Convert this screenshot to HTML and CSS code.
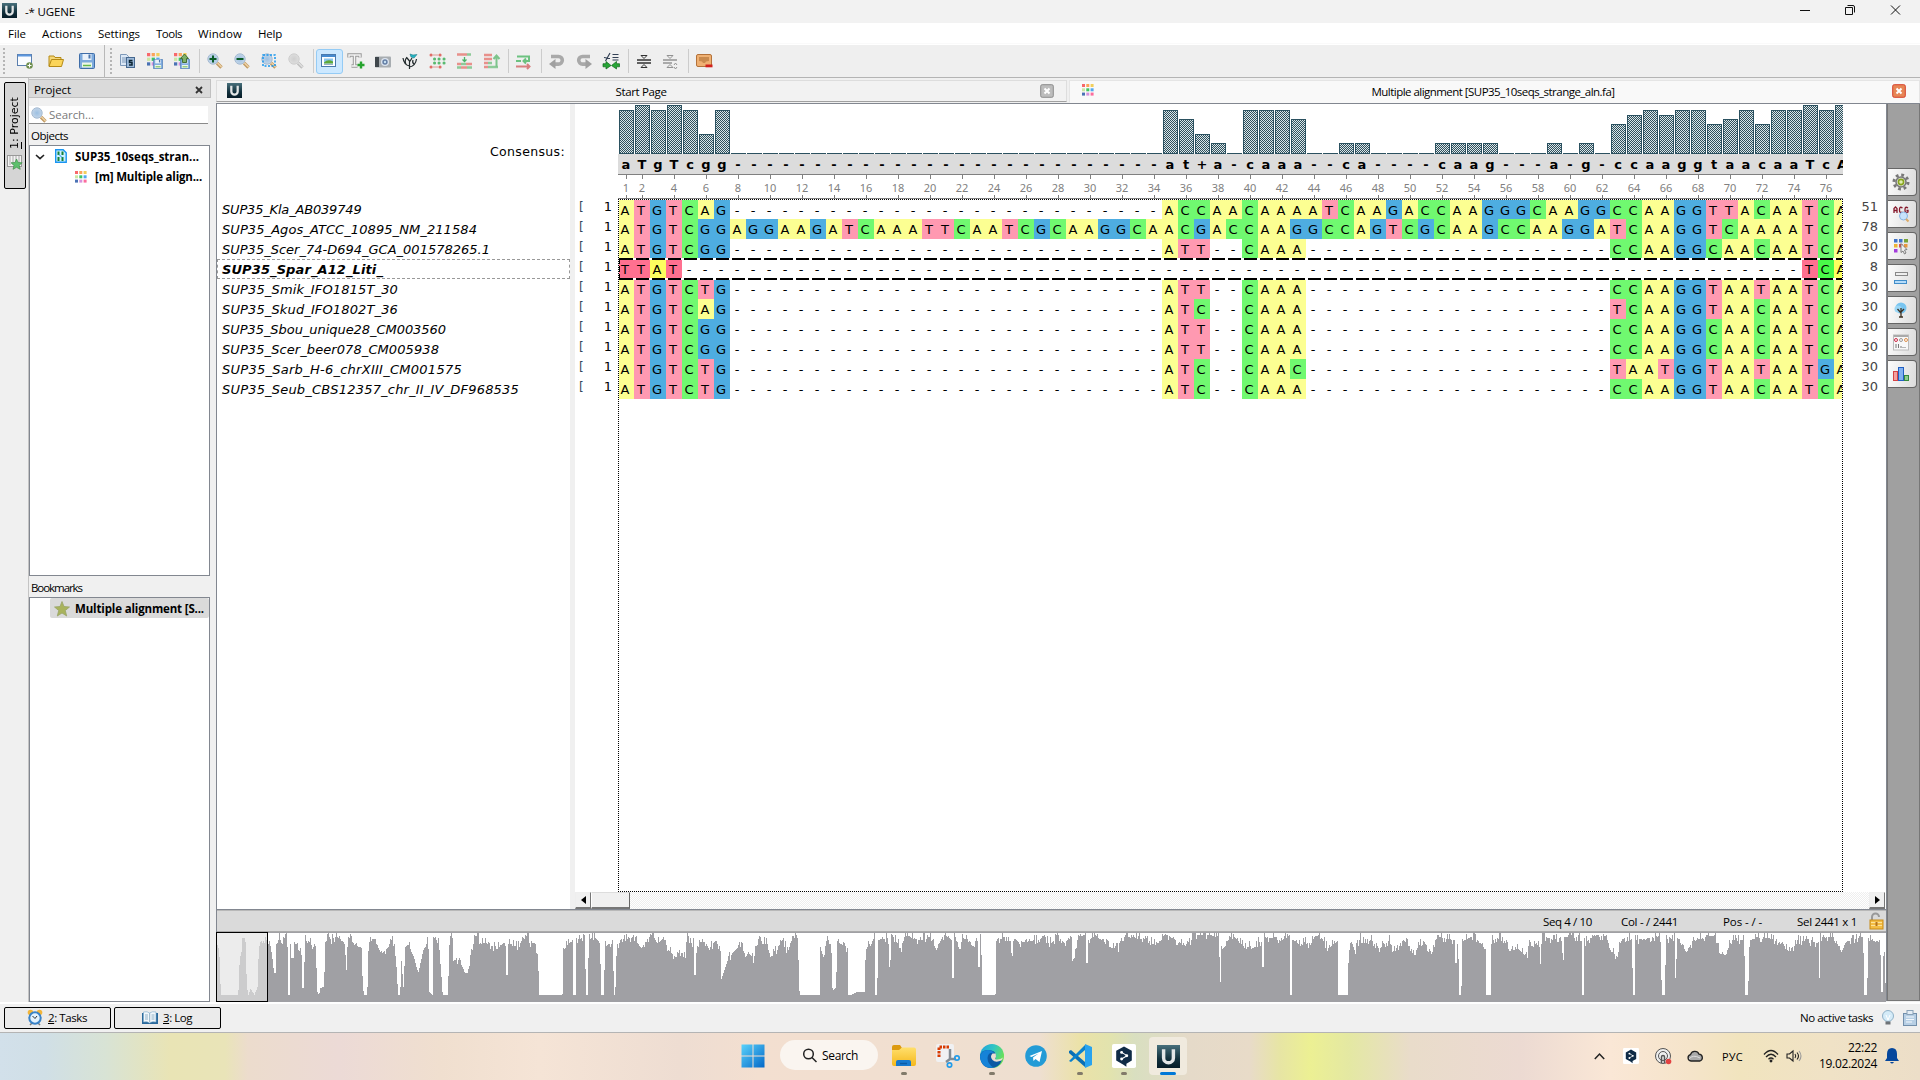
FILE: index.html
```html
<!DOCTYPE html>
<html lang="en">
<head>
<meta charset="utf-8">
<title>UGENE</title>
<link rel="stylesheet" href="styles.css">
</head>
<body>
<svg class="defs" aria-hidden="true">
  <defs>
    <linearGradient id="gTeal" x1="0" y1="0" x2="0" y2="1"><stop offset="0" stop-color="#48707c"/><stop offset=".6" stop-color="#12303c"/><stop offset="1" stop-color="#061c28"/></linearGradient>
    <linearGradient id="gWin" x1="0" y1="0" x2="1" y2="1"><stop offset="0" stop-color="#5ad2fb"/><stop offset="1" stop-color="#0468c8"/></linearGradient>
    <linearGradient id="gFold" x1="0" y1="0" x2="0" y2="1"><stop offset="0" stop-color="#ffdf6c"/><stop offset="1" stop-color="#f5b81d"/></linearGradient>
    <linearGradient id="gEdge" x1="0" y1="0" x2="1" y2=".4"><stop offset="0" stop-color="#1f9fe0"/><stop offset=".55" stop-color="#32c6c3"/><stop offset="1" stop-color="#67e05a"/></linearGradient>
    <radialGradient id="gLens"><stop offset="0" stop-color="#9cc0e2"/><stop offset="1" stop-color="#c3d5e8"/></radialGradient>
    <symbol id="logo" viewBox="0 0 16 16"><rect width="16" height="16" fill="url(#gTeal)"/><path d="M4.600 3v6a3.400 3.400 0 0 0 6.800 0V3" fill="none" stroke="#e3e6e7" stroke-width="2.400"/></symbol>
    <symbol id="lens" viewBox="0 0 16 16"><path d="M10 10l4.500 4.500" stroke="#c19a62" stroke-width="3.400"/><path d="M10.500 10l4 4" stroke="#efd4a8" stroke-width="1.400"/><circle cx="6" cy="6" r="5.200" fill="url(#gLens)" stroke="#a5bbd2"/></symbol>
    <symbol id="dots" viewBox="0 0 12 12"><path fill="#f8686b" d="M0 0h3v3H0z"/><path fill="#fba35a" d="M4.300 0h3v3h-3z"/><path fill="#f2cf5c" d="M8.600 0h3v3h-3z"/><path fill="#cbe7a4" d="M0 4.300h3v3H0z"/><path fill="#3fc663" d="M4.300 4.300h3v3h-3z"/><path fill="#51a8ef" d="M8.600 4.300h3v3h-3z"/><path fill="#4a72b4" d="M0 8.600h3v3H0z"/><path fill="#d592dd" d="M4.300 8.600h3v3h-3z"/><path fill="#fc6c9d" d="M8.600 8.600h3v3h-3z"/></symbol>
    <symbol id="floppy" viewBox="0 0 16 16"><rect x=".5" y=".5" width="15" height="15" rx="1" fill="#7daadd" stroke="#3f6da8"/><rect x="3.500" y="1" width="9" height="6" fill="#e9f1fa"/><path d="M9.500 1.500h2v4h-2z" fill="#4a76ae"/><rect x="3" y="9.500" width="10" height="5" fill="#eef7e8"/><path d="M4 12.500h8" stroke="#64b84b" stroke-width="1.500"/></symbol>
    <symbol id="uturn" viewBox="0 0 16 16"><path d="M2 3.500h7.500a3.800 3.800 0 0 1 0 7.600H5" fill="none" stroke="#a9a9a9" stroke-width="3.600"/><path d="M6.500 6v10L0 11z" fill="#a0a0a0"/></symbol>
    <symbol id="deepl" viewBox="0 0 20 20"><rect width="20" height="20" rx="1.500" fill="#fff"/><path d="M10 2l6.500 3.700v8L12 16.400V19l-2.800-2L3.500 13.700v-8z" fill="#0f2b46"/><path d="M8 7l4.500 2.700L8 12.500" fill="none" stroke="#fff" stroke-width=".9"/><circle cx="8" cy="7" r="1.200" fill="#fff"/><circle cx="12.300" cy="9.800" r="1.200" fill="#fff"/><circle cx="8" cy="12.500" r="1.200" fill="#fff"/></symbol>
  </defs>
</svg>

<header class="titlebar">
  <svg width="15" height="15"><use href="#logo"/></svg>
  <span data-w="50">-* UGENE</span>
  <svg class="wincontrols" width="110" height="23" fill="none" stroke="#111"><path d="M5 10.500h10"/><path d="M50.500 7.500h7v7h-7zM52.500 5.500h5.500q1.500 0 1.500 1.500v5.500"/><path d="M96 5.500l9 9m0-9l-9 9"/></svg>
</header>
<nav class="menubar">
  <span data-w="18">File</span><span data-w="40">Actions</span><span data-w="42">Settings</span><span data-w="26">Tools</span><span data-w="44">Window</span><span data-w="24">Help</span>
</nav>
<div class="toolbar">
  <i class="handle first"></i>
  <b class="btn wide"><svg width="16" height="16"><rect x=".5" y="1.500" width="14" height="11" fill="#fafcff" stroke="#5b7fae"/><path d="M1 2.500h13" stroke="#5c97de" stroke-width="2"/><circle cx="12.500" cy="12.500" r="3.300" fill="#6f8f4f"/><path d="M12.500 10.500v4m-2-2h4" stroke="#fff"/></svg></b>
  <b class="btn wide"><svg width="16" height="14"><path d="M1 12V2h5l1 1.500h6V6" fill="#f6d878" stroke="#b58a16"/><path d="M1 12.500L3.500 5.500h12l-2 7z" fill="#fbd55a" stroke="#b58a16"/></svg></b>
  <b class="btn wide"><svg width="16" height="16"><use href="#floppy"/></svg></b>
  <i class="break"></i><i class="handle"></i>
  <b class="btn"><svg width="16" height="15"><path d="M.5.500h6l2 2v9h-8z" fill="#dce8f6" stroke="#7d98b8"/><path d="M2 4h5M2 6h5M2 8h5" stroke="#7d98b8"/><rect x="6.500" y="3.500" width="8" height="10" fill="#9dbada" stroke="#46688f"/><path d="M12.500 6.500h-3v2h2.500v2.500h-3" fill="none" stroke="#0c2432" stroke-width="1.500"/></svg></b>
  <b class="btn"><svg width="16" height="16"><use href="#dots" width="13" height="13"/><svg x="6" y="6" width="10" height="10"><use href="#floppy"/></svg></svg></b>
  <b class="btn"><svg width="16" height="16"><use href="#dots" width="13" height="13"/><svg x="6" y="6" width="10" height="10"><use href="#floppy"/></svg><path d="M10.500 1l4 4.500h-2v4h-4v-4h-2z" fill="#7eb066" stroke="#426e34"/></svg></b>
  <i class="sep"></i>
  <b class="btn"><svg width="16" height="16"><use href="#lens"/><path d="M2.500 6h7M6 2.500v7" stroke="#0b5c28" stroke-width="2"/></svg></b>
  <b class="btn"><svg width="16" height="16"><use href="#lens"/><path d="M2.500 6h7" stroke="#0b5c28" stroke-width="2"/></svg></b>
  <b class="btn"><svg width="16" height="16"><use href="#lens"/><rect x="2" y="2" width="12" height="11" fill="none" stroke="#1797ee" stroke-width="1.500" stroke-dasharray="2 1.500"/></svg></b>
  <b class="btn disabled"><svg width="16" height="16"><use href="#lens"/></svg></b>
  <i class="sep"></i>
  <b class="btn active"><svg width="16" height="14"><rect x=".5" y=".5" width="14" height="12" fill="#fff" stroke="#4b7aae"/><path d="M1 2h13" stroke="#468ad0" stroke-width="2"/><rect x="3" y="4.500" width="9" height="5" fill="#8cc5ee"/><path d="M3 8.500q4-4 9-1v2H3z" fill="#5ea838"/><path d="M3 10.500h9" stroke="#9ab0c4"/></svg></b>
  <b class="btn"><svg width="17" height="16"><path d="M1 4.500V2h11v2.500M6.500 2v11M3.500 13h6" fill="none" stroke="#999" stroke-width="3.400"/><path d="M1 4.500V2h11v2.500M6.500 2v11M3.500 13h6" fill="none" stroke="#f4f4f4" stroke-width="1.400"/><path d="M13 8.500v7m-3.500-3.500h7" stroke="#26a32d" stroke-width="2.400"/></svg></b>
  <b class="btn"><svg width="16" height="13"><rect y="1.500" width="16" height="11" rx="1" fill="#a8adb1"/><path d="M0 2h4v10H0z" fill="#40474c"/><circle cx="10" cy="7" r="4" fill="#dce4ee"/><circle cx="10" cy="7" r="2.700" fill="#647ea4"/><circle cx="10" cy="7" r="1.200" fill="#c6e0f2"/></svg></b>
  <b class="btn"><svg width="16" height="16" fill="none" stroke="#20282a" stroke-width="1.200"><path d="M7.500 16V8M7.500 13Q2 12 1 5M7.500 14q6-1 7-8M4 11Q2 8 5 4M7.500 8L5 5M7.500 9l2.500-4M12 11q-2-1-1-4"/><path d="M8 1l3 1 4-.5-3 3.500-3-1z" fill="#25b5c4" stroke="#237c88" stroke-width=".6"/></svg></b>
  <b class="btn"><svg width="17" height="16" fill="none" stroke-width="3" stroke-linecap="round"><path d="M2 2h.1M11 2h.1M2 14h.1M11 14h.1" stroke="#df6d66"/><path d="M4 2h5M4 14h5" stroke="#df9a94" stroke-width="1"/><path d="M5.500 6h.1M10 6h.1M15 6h.1M5.500 10h.1M10 10h.1M15 10h.1" stroke="#59ba70"/></svg></b>
  <b class="btn"><svg width="15" height="16"><path d="M0 1.500h10M0 11h4M9 11h6M4 14.500h6" stroke="#e8908b" stroke-width="2.600"/><path d="M10 1.500h4M4 11h5M0 14.500h4M10 14.500h5" stroke="#8dca98" stroke-width="2.600"/><path d="M7.500 4v4m-2-1.500l2 2 2-2" fill="none" stroke="#49b366" stroke-width="1.300"/></svg></b>
  <b class="btn"><svg width="15" height="16"><path d="M0 2h8M0 6h8M0 10h4M0 14h4" stroke="#e8908b" stroke-width="2.400"/><path d="M4 10h4M4 14h10" stroke="#8dca98" stroke-width="2.400"/><path d="M12.500 14V3m-3 3l3-3.500 3 3.500" fill="none" stroke="#7dc48b" stroke-width="2"/></svg></b>
  <i class="sep"></i>
  <b class="btn"><svg width="16" height="15" fill="none" stroke-width="2"><path d="M1 2.500h12v4.500H8M0 7h5m5-2.500L7.500 7l2.500 2.500" stroke="#6cc280"/><path d="M0 12.500h13m-2-2.500l2.500 2.500-2.500 2.500" stroke="#d78080"/></svg></b>
  <i class="sep"></i>
  <b class="btn"><svg width="16" height="16"><use href="#uturn"/></svg></b>
  <b class="btn"><svg class="flip" width="16" height="16"><use href="#uturn"/></svg></b>
  <b class="btn"><svg width="17" height="16"><path d="M7 0L2.500 8M1 4.500l6 1M9.500 1.500h6M9.500 4.500h6M9.500 7h6" stroke="#334155" stroke-width="1.200" fill="none"/><path d="M0 10.700h3V8.500l5 4-5 3.500v-2.200H0zM16.500 10.700h-3V8.500l-5 4 5 3.500v-2.200h3z" fill="#27a636" stroke="#10691d" stroke-width=".7"/></svg></b>
  <i class="sep"></i>
  <b class="btn"><svg width="14" height="15" fill="none" stroke="#333"><path d="M0 6h14M0 9h14" stroke-width="1.300"/><path d="M4 1.500h6L7 4.500zM4 13.500h6L7 10.500z"/></svg></b>
  <b class="btn disabled"><svg width="16" height="15" fill="none" stroke="#555"><path d="M0 6h14M0 9h9" stroke-width="1.300"/><path d="M4 1.500h6L7 4.500zM4 13.500h6L7 10.500zM11 11l1.500-2 1.500 2m0 2l-1.500 2-1.500-2"/></svg></b>
  <i class="sep"></i>
  <b class="btn"><svg width="17" height="14"><rect x=".5" y=".5" width="15" height="12" rx="1.500" fill="#efb072" stroke="#b4723a"/><path d="M3 7V3h10v4l-3 .5-1 1.500H7L6 7.500z" fill="#c98a4e"/><rect x="9.500" y="10.500" width="7" height="2.800" fill="#d2201c"/></svg></b>
</div>

<main class="workspace">
  <aside class="rail">
    <div class="railtab"><svg width="16" height="17"><rect x=".5" y="1.500" width="14" height="11" fill="#f4f4f4" stroke="#999"/><path d="M3 2v9M6 2v9M9 2v9M12 2v9" stroke="#aaa"/><path d="M9.500 5l1.700 3.500 4 .3-3 2.500 1 4-3.700-2-3.500 2 1-4-3-2.500 4-.3z" fill="#5cc06c" stroke="#418e4a" stroke-width=".7"/></svg><span><u>1</u>: Project</span></div>
  </aside>
  <section class="project">
    <div class="panelhead"><span data-w="37">Project</span><svg width="8" height="8"><path d="M1 1l6 6m0-6L1 7" stroke="#333" stroke-width="1.800"/></svg></div>
    <div class="search"><svg width="16" height="16"><use href="#lens"/></svg><span data-w="45">Search...</span></div>
    <div class="label"><span data-w="37">Objects</span></div>
    <div class="tree objects">
      <div class="node"><svg width="10" height="6"><path d="M1 1l4 3.700L9 1" fill="none" stroke="#222" stroke-width="1.600"/></svg><svg width="12" height="14"><path d="M.7.700h7.500l3 3v9.600H.7z" fill="#cdf0ff" stroke="#1a95f2" stroke-width="1.400"/><path d="M3.500 2.500v3.500M3.500 8v4M7.500 2.500v3.500M7.500 8v4" stroke="#168139" stroke-width="2"/><path d="M4 5.500l3 3" stroke="#1a95f2"/></svg><span data-w="124">SUP35_10seqs_stran...</span></div>
      <div class="node child"><svg width="12" height="12"><use href="#dots"/></svg><span data-w="107">[m] Multiple align...</span></div>
    </div>
    <div class="label marks"><span data-w="51">Bookmarks</span></div>
    <div class="tree">
      <div class="bookmark"><svg width="16" height="16"><path d="M8 .5l2 5 5.500.500-4.200 3.500 1.400 5.500L8 12l-4.700 3 1.400-5.500L.5 6 6 5.500z" fill="#a9b35c" stroke="#98a368" stroke-width=".8"/></svg><span data-w="129">Multiple alignment [S...</span></div>
    </div>
  </section>

  <section class="documents">
    <div class="tabs">
      <div class="tab"><svg width="15" height="15"><use href="#logo"/></svg><span data-w="51">Start Page</span><svg width="14" height="14"><rect x=".7" y=".7" width="12.600" height="12.600" rx="1.500" fill="#bdbdbd" stroke="#8c8c8c"/><path d="M4.500 4.500l5 5m0-5l-5 5" stroke="#fff" stroke-width="2"/></svg></div>
      <div class="tab current"><svg width="12" height="12"><use href="#dots"/></svg><span data-w="243">Multiple alignment [SUP35_10seqs_strange_aln.fa]</span><svg width="14" height="14"><rect x=".7" y=".7" width="12.600" height="12.600" rx="1.500" fill="#e78656" stroke="#d8402a"/><path d="M4.500 4.500l5 5m0-5l-5 5" stroke="#fff" stroke-width="2"/></svg></div>
    </div>
    <div class="editor">
      <div class="view">
        <div class="alignment">
          <div class="names">
            <div class="consensuslabel"><span data-w="75">Consensus:</span></div>
            <div id="names"></div>
          </div>
          <div class="splitter"></div>
          <div class="seqcol">
            <div class="seqarea">
              <div class="starts" id="starts"></div>
              <div class="canvas">
                <div class="bars" id="bars"></div>
                <div class="consensus" id="consensus"></div>
                <div class="ruler" id="ruler"></div>
                <div class="rows" id="rows"></div>
              </div>
              <div class="ends" id="ends"></div>
            </div>
            <div class="scroll"><b class="arrow"><svg width="5" height="8"><path d="M5 0v8L0 4z"/></svg></b><b class="thumb"></b><i></i><b class="arrow"><svg width="5" height="8"><path d="M0 0v8l5-4z"/></svg></b></div>
          </div>
        </div>
        <div class="position">
          <span class="p1" data-w="49">Seq 4 / 10</span><span class="p2" data-w="57">Col - / 2441</span><span class="p3" data-w="39">Pos - / -</span><span class="p4" data-w="60">Sel 2441 x 1</span>
          <svg width="15" height="17"><path d="M3 7V4a3.500 3.500 0 0 1 7 0" fill="none" stroke="#999" stroke-width="2"/><rect x="1" y="7" width="13" height="9" fill="#f4bd43" stroke="#c88b18"/><path d="M2 9.500h11M2 12.500h11" stroke="#fde39b"/><path d="M7.500 9v4" stroke="#b5721c" stroke-width="2"/></svg>
        </div>
        <div class="overview"><svg width="1669" height="69" id="overview" shape-rendering="crispEdges"></svg><div class="window"></div></div>
      </div>
      <aside class="options">
        <b><svg width="18" height="18"><circle cx="9" cy="9" r="7" fill="none" stroke="#777" stroke-width="3" stroke-dasharray="2.750 2.750"/><circle cx="9" cy="9" r="5" fill="#dcdcdc" stroke="#777" stroke-width="1.500"/><circle cx="9" cy="9" r="2.600" fill="#e0edb2" stroke="#87a51d" stroke-width="1.600"/></svg></b>
        <b><svg width="17" height="18"><g fill="none" stroke="#85182b" stroke-width="1.300"><path d="M1 8V3.500L2.500 2 4 3.500V8M1 5.500h3M9.500 3q-3-2-3 1.500v1q0 3 3 1.500M15 3q-3-2-3 1.500v1q0 3 3 1.500V5.500h-1.500"/></g><circle cx="10.500" cy="11" r="4" fill="#c8e3fc" stroke="#87b5e2"/><path d="M13 14l2.500 2.500" stroke="#dcaa66" stroke-width="2"/></svg></b>
        <b><svg width="16" height="17"><path d="M1 1h3.500v3.500H1zM6 1h3.500v3.500H6z" fill="#4074c9"/><path d="M11 1h4v3.500h-4z" fill="#77a438"/><path d="M1 6h3.500v3.500H1z" fill="#edb334"/><path d="M6 6h3.500v3.500H6z" fill="#d84d56"/><path d="M11 6h3.500v3.500H11z" fill="#e8973f"/><path d="M1 11h3.500v3.500H1z" fill="#a43cdc"/><path d="M8 5.500l6 6-2.500.500 1.500 3-1.500 1-1.500-3-2 1.500z" fill="#eee" stroke="#666" stroke-width=".8"/></svg></b>
        <b><svg width="15" height="14"><rect x="1.500" y="1.500" width="12" height="3" fill="#eee" stroke="#888"/><rect x=".5" y="9.500" width="12" height="3" fill="#b5dcfa" stroke="#418dc9"/></svg></b>
        <b><svg width="14" height="16"><circle cx="7" cy="6" r="5.500" fill="#79c5f0"/><circle cx="4" cy="7" r="3.500" fill="#9bd7f6"/><path d="M7 15V6M7 11L3.500 7M7 10l3-3M5 15h4" stroke="#3d3022" stroke-width="1.300"/></svg></b>
        <b><svg width="16" height="17"><rect x=".5" y="1" width="15" height="15" fill="#f8f8f8" stroke="#bbb"/><path d="M1 2h14" stroke="#aaa" stroke-width="2"/><g fill="none"><circle cx="3" cy="6" r="1.500" stroke="#d12b47"/><circle cx="8" cy="6" r="1.500" stroke="#999"/><circle cx="13" cy="6" r="1.500" stroke="#e1914b"/></g><path d="M3 10v4M5.500 10v4M8 12v2M10 13v1M12 13v1" stroke="#777"/></svg></b>
        <b><svg width="17" height="16"><rect x=".5" y="5.500" width="4" height="9" fill="#f5a09e" stroke="#d64244"/><rect x="5.500" y="1.500" width="5" height="13" fill="#81b1f0" stroke="#215fc2"/><rect x="11.500" y="9.500" width="4" height="5" fill="#8fcc8c" stroke="#368a3c"/></svg></b>
      </aside>
    </div>
  </section>
</main>

<footer class="statusbar">
  <div class="dock"><svg width="16" height="18"><circle cx="3.500" cy="3.500" r="2.800" fill="#f2b53a"/><circle cx="12.500" cy="3.500" r="2.800" fill="#f2b53a"/><path d="M3 16l2-2m8 2l-2-2" stroke="#777" stroke-width="1.500"/><circle cx="8" cy="9" r="5.700" fill="#e4f3fe" stroke="#3a83c7" stroke-width="2"/><path d="M5.500 7L8 9.500 10 7" stroke="#333" fill="none"/></svg><span data-w="39"><u>2</u>: Tasks</span></div>
  <div class="dock"><svg width="16" height="14"><path d="M0 2h16v11H0z" fill="#2a699c"/><path d="M1.500 1q4-1 6 1 3-2 6.500-1v10q-4-1-6.500 1-2-2-6-1z" fill="#f1f7fc" stroke="#7ba9ca" stroke-width=".6"/><path d="M7.700 2v9M3 4h3M3 6h3M3 8h3M9.500 4h3M9.500 6h3M9.500 8h3" stroke="#8fb0c6"/></svg><span data-w="29"><u>3</u>: Log</span></div>
  <div class="right"><span data-w="73">No active tasks</span>
    <svg width="14" height="16"><circle cx="7" cy="6" r="5.500" fill="#d4ebf8" stroke="#8fb1c8"/><path d="M4.500 11.500h5v3h-5z" fill="#6e7377"/><path d="M5 5l2 5 2-5" fill="none" stroke="#fff"/></svg>
    <svg width="15" height="16"><rect x=".5" y="3.500" width="13" height="12" fill="#b7cfe5" stroke="#728fab"/><rect x="4" y=".5" width="6" height="4" fill="#e4edf5" stroke="#8aa2b8"/><path d="M3 7h8M3 9.500h8M3 12h6" stroke="#f3f8fc"/></svg>
  </div>
</footer>

<div class="taskbar">
  <div class="apps">
    <b><svg width="24" height="24"><path fill="url(#gWin)" d="M.5.500h11v11H.5zM12.500.500h11v11h-11zM.5 12.500h11v11H.5zM12.500 12.500h11v11h-11z"/></svg></b>
    <div class="find"><svg width="16" height="16" fill="none" stroke="#222" stroke-width="1.500"><circle cx="6.500" cy="6" r="4.800"/><path d="M10 9.500l4.500 4.500"/></svg><span data-w="36">Search</span></div>
    <b class="run"><svg width="24" height="24"><path d="M0 3q0-2 2-2h6l2 3-2 3H0z" fill="#dd9a0f"/><path d="M0 6h7l3-2.500h12q2 0 2 2V20q0 2-2 2H2q-2 0-2-2z" fill="url(#gFold)"/><path d="M4 22v-4q0-2 2-2h11q2 0 2 2v4z" fill="#1779cf"/><path d="M8 19.500h7" stroke="#0b5ba6" stroke-width="1.500"/></svg></b>
    <b><svg width="24" height="24"><rect width="18" height="18" rx="2" fill="#f0f1f3"/><path d="M3 13V3h10" fill="none" stroke="#d83b01" stroke-width="3" stroke-dasharray="2.500 1"/><path d="M14 5v10m0 0l-4 3m4-3h6" stroke="#828b93" stroke-width="2.500"/><circle cx="21" cy="14" r="2.200" fill="none" stroke="#229cea" stroke-width="1.700"/><circle cx="13.500" cy="21" r="2.200" fill="none" stroke="#229cea" stroke-width="1.700"/></svg></b>
    <b class="run"><svg width="24" height="24"><circle cx="12" cy="12" r="12" fill="url(#gEdge)"/><path d="M0 12Q1 6 8 6q8 0 8 6 0 2-1 3 2 2 7 1-3 8-11 8Q1 24 0 12z" fill="#0c59a4"/><path d="M0 12Q2 6 8 6q4 0 6 3-6-1-6.500 5 0 6 6 9.500Q1 25 0 12z" fill="#1683d8"/><path d="M12.500 9.500q-3 3 0 6.500 3 3 9 .5l1.500-3q-4 3-8 1.500 1.500-2 .8-5.500z" fill="#eaded2"/></svg></b>
    <b><svg width="22" height="22"><circle cx="11" cy="11" r="10.800" fill="#239bd6"/><path d="M4.500 11L17 6l-2.500 11-4-3-2 2-.5-3.500 5.500-4-7 3.500z" fill="#fff"/></svg></b>
    <b class="run"><svg width="24" height="24"><path d="M1 7l2-1 14 12v5L1 9z" fill="#0a6fb5"/><path d="M1 17L17 1v5L3 18z" fill="#0a82ce"/><path d="M17 0l7 3v18l-7 3z" fill="#28a3ef"/></svg></b>
    <b class="run"><svg width="24" height="24"><use href="#deepl"/></svg></b>
    <b class="run front"><svg width="23" height="23"><use href="#logo"/></svg></b>
  </div>
  <div class="tray">
    <svg width="11" height="24" class="t1"><path d="M.8 15l4.700-5 4.700 5" fill="none" stroke="#222" stroke-width="1.500"/></svg>
    <svg width="16" height="16" class="t2"><use href="#deepl"/></svg>
    <svg width="17" height="17" class="t3"><g fill="none" stroke="#555"><circle cx="8" cy="8" r="7.500" fill="#eee"/><circle cx="8" cy="8" r="4.500"/><path d="M6.500 15V9a1.500 1.500 0 1 1 3 0v6" stroke-width="1.500"/></g><circle cx="13.500" cy="13.500" r="2.800" fill="#e34242"/></svg>
    <svg width="17" height="12" class="t4"><path d="M4 11a3.200 3.200 0 0 1-.5-6.300 4.500 4.500 0 0 1 8.500-.5A3.500 3.500 0 0 1 13 11z" fill="#aaa" stroke="#222" stroke-width="1.300"/><path d="M2 9q4-5 11-1" fill="none" stroke="#ddd"/></svg>
    <span class="lang" data-w="21">РУС</span>
    <svg width="16" height="14" class="t5" fill="none" stroke="#222" stroke-width="1.300"><path d="M1 5.500q7-8 14 0M3 8q5-5.500 10 0M5.500 10.300q2.500-2.500 5 0"/><circle cx="8" cy="12" r=".8" fill="#222"/></svg>
    <svg width="16" height="14" class="t6" fill="none" stroke="#222" stroke-width="1.100"><path d="M1 5v4h2.500l3.500 3V2L3.500 5zM9 5q1.500 2 0 4M11 3.500q3 3.500 0 7"/><path d="M13 2q4 5 0 10" stroke="#999"/></svg>
    <div class="clock"><span data-w="29">22:22</span><span data-w="58">19.02.2024</span></div>
    <svg width="14" height="16" class="t7"><path d="M7 0q5 0 5 6v4l2 3H0l2-3V6q0-6 5-6zM5 14h4q-2 3-4 0z" fill="#06479c"/></svg>
  </div>
</div>
<script src="app.js"></script>
</body>
</html>
```
FILE: styles.css
```css
* { box-sizing: border-box; }
body { margin: 0; width: 1920px; height: 1080px; overflow: hidden; display: flex; flex-direction: column; background: #f0f0f0; color: #000; font: 11.5px/16px "Open Sans", "Noto Sans", sans-serif; white-space: nowrap; }
svg { display: block; flex: none; overflow: visible; }
.defs { position: absolute; width: 0; height: 0; }
b, i { display: block; font-style: normal; flex: none; }
.flip { transform: scaleX(-1); }

.titlebar { height: 23px; background: #f2f2f2; display: flex; align-items: center; gap: 8px; padding: 0 2px; flex: none; }
.titlebar > svg:first-child { margin-top: -2px; }
.wincontrols { margin-left: auto; margin-right: 13px; }
.menubar { height: 20px; background: #fff; display: flex; align-items: center; gap: 16px; padding: 1px 8px 0; flex: none; }
.toolbar { height: 35px; border-top: 1px solid #fafafa; border-bottom: 1px solid #b4b4b4; box-shadow: inset 0 1px #fff; background: #efefef; display: flex; align-items: center; padding-top: 1px; flex: none; }
.btn { height: 25px; width: 27px; display: flex; align-items: center; justify-content: center; }
.btn.wide { width: 31px; }
.btn.active { background: #cce8ff; border: 1px solid #94cbf5; border-radius: 3px; }
.btn.disabled { filter: grayscale(1); opacity: .6; }
.sep { width: 6px; height: 24px; background: linear-gradient(#ccc, #ccc) 3px 0 / 1px 100% no-repeat; }
.break { width: 4px; height: 33px; background: linear-gradient(#b8b8b8, #b8b8b8) 1px 0 / 1px 100% no-repeat; }
.handle { width: 8px; height: 27px; background: repeating-linear-gradient(#b5b5b5 0 2px, transparent 2px 4px) 3px 0 / 2px 100% no-repeat; }
.handle.first { width: 9.5px; }

.workspace { height: 924px; flex: none; display: flex; }
.rail { width: 28px; padding: 4px 2px 0 4px; flex: none; }
.railtab { height: 107px; width: 22px; border: 1px solid #000; border-radius: 2px; background: #d5d5d5; display: flex; align-items: center; gap: 5px; writing-mode: vertical-rl; transform: rotate(180deg); padding: 17px 0 0; font: 11px/14px "DejaVu Sans", sans-serif; }
.railtab svg { transform: rotate(180deg); }
.project { width: 183px; border-left: 1px solid #c4c4c4; padding: 1px 0 0; display: flex; flex-direction: column; flex: none; }
.panelhead { height: 19px; background: #dadada; border: 1px solid #c0c0c0; border-left: 0; display: flex; align-items: center; justify-content: space-between; padding: 2px 7px 0 5px; width: 182px; }
.search { height: 18px; margin: 8px 3px 0 0; background: #fff; border-bottom: 1px solid #8a8a8a; color: #7a7a7a; display: flex; align-items: center; gap: 2px; padding-left: 2px; }
.label { height: 21px; padding: 4px 0 0 2px; }
.label.marks { height: 21px; padding-top: 4px; }
.tree { border: 1px solid #828790; background: #fff; margin-right: 1px; flex: 1; font-weight: 700; }
.objects { height: 431px; flex: none; }
.node { height: 20px; display: flex; align-items: center; padding: 2px 0 0 5px; gap: 8px; }
.node svg + svg { margin: -2px 0 0 2px; }
.node.child { padding-left: 45px; gap: 8px; }
.bookmark { height: 20px; margin-left: 20px; background: #dadada; border-radius: 2px; display: flex; align-items: center; gap: 5px; padding: 2px 0 0 4px; }

.documents { flex: 1; display: flex; flex-direction: column; padding: 2px 0 1px 5px; min-width: 0; }
.tabs { height: 23px; display: flex; flex: none; gap: 2px; }
.tab { width: 851px; height: 22px; background: #f2f2f2; border: 1px solid #ddd; border-bottom-color: #a0a0a0; display: flex; align-items: center; justify-content: space-between; padding: 0 12px 0 10px; }
.tab svg { margin-top: -2px; }
.tab svg:last-child { margin-top: 0; }
.tab span { margin: 1px 0 0; }
.tab.current { flex: 1; height: 23px; background: #f9f9f9; border-color: #e5e5e5; border-bottom-color: transparent; padding: 0 13px 0 12px; }
.tab.current svg:first-child { margin-top: -4px; }
.tab.current svg:last-child { margin-top: -2px; }
.editor { flex: 1; display: flex; border-top: 1px solid #828790; min-height: 0; }
.view { width: 1671px; border: solid #828790; border-width: 0 1px; display: flex; flex-direction: column; flex: none; }
.alignment { height: 806px; background: #fff; display: flex; border-bottom: 1px solid #828790; flex: none; }
.names { width: 353px; font: italic 13px/22px "DejaVu Sans", sans-serif; flex: none; }
.consensuslabel { height: 95px; padding: 37px 5px 0 0; display: flex; justify-content: flex-end; font-style: normal; font-size: 12.5px; }
.name { height: 20px; padding-left: 5px; display: flex; }
.name.current { border: 1px dashed #999; font-weight: 700; line-height: 20px; padding-left: 4px; }
.splitter { width: 5px; background: #f0f0f0; flex: none; }
.seqcol { flex: 1; display: flex; flex-direction: column; }
.seqarea { height: 788px; display: flex; font: 13px/20px "DejaVu Sans", sans-serif; }
.starts { width: 43px; padding: 93px 6px 0 4px; }
.starts div { display: flex; justify-content: space-between; height: 20px; }
.starts div::before { content: "["; color: #34495c; font-size: 12px; }
.ends { padding: 93px 8px 0 0; flex: 1; text-align: right; color: #444; }
.ends div { height: 20px; }
.canvas { width: 1225px; overflow: hidden; flex: none; display: flex; flex-direction: column; }
.bars { height: 50px; display: flex; align-items: flex-end; flex: none; padding-left: 1px; }
.bars i { width: 15px; margin-right: 1px; border: 1px solid #2b5160; background: repeating-conic-gradient(#31505b 0 25%, #d9e6ea 0 50%) 0 0 / 2px 2px; }
.consensus { height: 20px; line-height: 21px; background: #dcdcdc; display: flex; font-weight: 700; flex: none; width: 1232px; }
.consensus b, .line b { width: 16px; text-align: center; padding-right: 2px; height: 20px; font-weight: inherit; }
.consensus b { padding-right: 0; }
.ruler { height: 25px; display: flex; flex: none; border: solid #808080; border-width: 1px 0; width: 1232px; color: #808080; font: 11px/23px "Noto Sans", sans-serif; }
.ruler b { width: 16px; display: flex; justify-content: center; font-weight: 400; }
.ruler .tick { background: linear-gradient(#808080, #808080) 8px 0 / 1px 4px no-repeat, linear-gradient(#808080, #808080) 8px 100% / 1px 3px no-repeat; padding-top: 1px; }
.rows { flex: 1; border: dotted #000; border-width: 1px; overflow: hidden; }
.line { display: flex; height: 20px; width: 1232px; margin-left: -1px; line-height: 21px; }
.line:first-child { margin-top: -1px; border-top: 1px dotted #000; }
.A { background: #fcff92; } .C { background: #70f970; } .T { background: #ff99b1; } .G { background: #4eade1; }
.line.current { position: relative; }
.line.current::after { content: ""; position: absolute; inset: -1px 0; border-left: 2px dashed #000; background: repeating-linear-gradient(90deg, #000 0 13px, #fff 13px 16px) 0 0 / 100% 2px no-repeat, repeating-linear-gradient(90deg, #000 0 13px, #fff 13px 16px) 0 100% / 100% 2px no-repeat; }
.current .T { background: #ff7090; } .current .A { background: #fdff5f; } .current .C { background: #49f949; }
.scroll { height: 17px; display: flex; padding-right: 1px; }
.scroll i { flex: 1; background: repeating-conic-gradient(#eee 0 25%, #fff 0 50%) 0 0 / 2px 2px; }
.arrow { width: 16px; background: #f0f0f0; border: solid; border-color: #eee #777 #777 #eee; border-width: 1px 1px 2px 1px; display: flex; align-items: center; justify-content: center; }
.thumb { width: 39px; background: #f0f0f0; border: solid; border-color: #ddd #666 #777 #fff; border-width: 1px 1px 2px 1px; }
.position { height: 22px; background: #dadada; border-bottom: 1px solid #aaa; border-top: 1px solid #b8b8b8; display: flex; align-items: center; padding-left: 1326px; flex: none; }
.position span { padding-top: 1px; }
.p2 { margin-left: 29px; } .p3 { margin-left: 45px; } .p4 { margin-left: 35px; }
.position svg { margin-left: 12px; }
.overview { flex: 1; background: #fff; position: relative; border-top: 1px solid #a0a0a4; }
.window { position: absolute; left: -1px; top: -1px; width: 52px; height: 70px; border: 1px solid #000; background: rgba(226, 226, 226, .66); }
.options { flex: 1; background: #a0a0a0; border: 1px solid #777; border-top: 0; padding: 64px 2px 0 0; display: flex; flex-direction: column; gap: 4px; }
.options b { height: 28px; background: linear-gradient(100deg, #fbfbfb, #dcdcdc); border: 1px solid #666; border-radius: 0 4px 4px 0; border-left: 0; display: flex; align-items: center; justify-content: center; padding-right: 2px; }

.statusbar { height: 31px; flex: none; background: #f0f0f0; border-top: 2px solid #fff; border-bottom: 1px solid #b4b4b4; display: flex; padding: 3px 2px 0 4px; gap: 3px; }
.dock { width: 107px; height: 22px; border: 1px solid #000; border-radius: 2px; display: flex; align-items: center; justify-content: center; gap: 5px; padding-right: 1px; background: #ebebeb; }
.right { margin-left: auto; height: 22px; display: flex; align-items: center; gap: 8px; }
.taskbar { height: 47px; flex: none; display: flex; justify-content: space-between; font-size: 12px; background: linear-gradient(90deg, #d2e0ea 0, #d0dfe6 45px, #d8e3d5 105px, #e9e4b5 170px, #e9e4b8 225px, #ecdccd 248px, #ecdad6 340px, #f0dfcf 440px, #f5e4d6 540px, #eeddd2 680px, #f3dfd0 760px, #eedfd0 1040px, #ebe2a8 1080px, #e2e3ae 1110px, #d9dfc0 1135px, #e5dac9 1190px, #e8dbc8 1250px, #e7e5a4 1280px, #ecf093 1310px, #e4e8a3 1350px, #e9dcca 1410px, #ecdad2 1520px, #fae7d6 1610px, #f5e4ca 1690px, #f1e4be 1740px, #f0e2c6 1830px, #ecdec8 1920px); }
.apps { display: flex; margin-left: 734px; align-items: center; height: 46px; }
.apps > b { position: relative; width: 44px; height: 38px; display: flex; align-items: center; justify-content: center; }
.apps > b:first-child { width: 38px; }
.find { width: 98px; height: 30px; margin: 0 4px 2px 8px; border-radius: 15px; background: #faf5f0; display: flex; align-items: center; gap: 4px; padding: 2px 0 0 22px; }
.run::after { content: ""; position: absolute; left: 19px; bottom: 0; width: 6px; height: 3px; border-radius: 2px; background: #817a6a; }
.apps > .front { width: 38px; margin-left: 3px; background: #f0eade; border-radius: 4px; }
.front::after { left: 11px; width: 16px; background: #0078d7; }
.tray { display: flex; align-items: center; width: 326px; height: 46px; flex: none; }
.t2 { margin-left: 18px; } .t3 { margin-left: 16px; } .t4 { margin-left: 15px; }
.lang { margin-left: 18px; margin-right: 20px; padding-top: 2px; font-size: 11px; }
.t6 { margin-left: 7px; }
.clock { display: flex; flex-direction: column; align-items: flex-end; margin-left: 17px; width: 58px; }
.t7 { margin-left: 8px; }
```
FILE: app.js
```js
const gap = n => '-'.repeat(n);
const byId = id => document.getElementById(id);
const std = (head, mid, tail) => head + gap(27) + mid + gap(19) + tail;

const sequences = [
  ['SUP35_Kla_AB039749', 139.5, 51, 'ATGTCAG' + gap(27) + 'ACCAACAAAATCAAGACCAAGGGCAAGGCCAAGGTTACAATCA'],
  ['SUP35_Agos_ATCC_10895_NM_211584', 255, 78, 'ATGTCGGAGGAAGATCAAATTCAATCGCAAGGCAACGACCAAGGCCAGTCGCAAGCCAAGGATCAAGGTCAAAATCA'],
  ['SUP35_Scer_74-D694_GCA_001578265.1', 268, 30, std('ATGTCGG', 'ATT--CAAA', 'CCAAGGCAACAATCA')],
  ['SUP35_Spar_A12_Liti_', 161, 8, 'TTAT' + gap(70) + 'TCA'],
  ['SUP35_Smik_IFO1815T_30', 176, 30, std('ATGTCTG', 'ATT--CAAA', 'CCAAGGTAATAATCA')],
  ['SUP35_Skud_IFO1802T_36', 176, 30, std('ATGTCAG', 'ATC--CAAA', 'TCAAGGTAACAATCA')],
  ['SUP35_Sbou_unique28_CM003560', 224, 30, std('ATGTCGG', 'ATT--CAAA', 'CCAAGGCAACAATCA')],
  ['SUP35_Scer_beer078_CM005938', 217, 30, std('ATGTCGG', 'ATT--CAAA', 'CCAAGGCAACAATCA')],
  ['SUP35_Sarb_H-6_chrXIII_CM001575', 240, 30, std('ATGTCTG', 'ATC--CAAC', 'TAATGGTAATAATGA')],
  ['SUP35_Seub_CBS12357_chr_II_IV_DF968535', 297, 30, std('ATGTCTG', 'ATC--CAAA', 'CCAAGGTAACAATCA')]
];
const current = 3;
const cells = s => [...s].map(c => `<b class="${c === '-' ? '' : c}">${c}</b>`).join('');
const each = f => sequences.map(f).join('');
byId('names').innerHTML = each((s, i) => `<div class="name${i === current ? ' current' : ''}"><span data-w="${s[1]}">${s[0]}</span></div>`);
byId('starts').innerHTML = each(() => '<div><span>1</span></div>');
byId('ends').innerHTML = each(s => `<div>${s[2]}</div>`);
byId('rows').innerHTML = each((s, i) => `<div class="line${i === current ? ' current' : ''}">${cells(s[3])}</div>`);

const consensus = 'aTgTcgg' + gap(27) + 'at+a-caaa--ca----caag---a-g-ccaaggtaacaaTcA';
byId('consensus').innerHTML = [...consensus].map(c => `<b>${c}</b>`).join('');

// Column conservation, in pixels of bar height
const heights = [44, 49, 44, 49, 44, 20, 44, ...Array(27).fill(1),
  44, 35, 20, 11, 1, 44, 44, 44, 35, 1, 1, 11, 11, 1, 1, 1, 1, 11, 11, 11, 11, 1, 1, 1, 11, 1, 11, 1,
  30, 39, 44, 39, 44, 44, 30, 35, 44, 30, 44, 44, 49, 44, 49];
byId('bars').innerHTML = heights.map(h => `<i style="height:${h}px${h === 1 ? ';border-bottom:0' : ''}"></i>`).join('');

let ruler = '';
for (let n = 1; n <= 77; n++) ruler += n === 1 || n % 2 === 0 ? `<b class="tick">${n}</b>` : '<b></b>';
byId('ruler').innerHTML = ruler;

// Overview profile: each block is [origin, units per pixel, "position:depth" samples]
const profile = [
  [0, 2.178, '471:165 477:228 480:345 518:345 520:260 527:180 533:180 537:325 540:345 545:325 553:345 560:320 563:185 570:190 580:165 583:190 590:210 596:280 599:280 600:205 607:170 615:195 621:160 624:160 625:190 627:345 630:345 631:185 637:262 640:187 655:205 657:325 661:325 663:160 672:185 680:195 687:215 690:335 694:345 697:325 705:320 707:190 712:160 720:180 730:170 740:175 750:190 754:280 757:170 770:190 787:205 789:320 792:345 799:345 801:205 806:170 820:180 832:220 845:200 852:175 859:210 862:250 866:345 871:345 872:220 878:325 881:200 887:190 900:230 910:280 920:215 932:180 934:335 941:345 943:170 955:190 962:320 963:345 975:345 977:190 981:160 984:160 987:240 1000:240 1012:280 1018:280 1025:210 1030:190 1038:160 1042:160 1043:190 1060:190 1080:205 1101:185 1102:285 1105:285 1106:190 1130:200 1149:160 1151:160 1152:190 1165:190 1171:230 1173:345 1224:345 1226:210 1235:195 1246:180 1248:345 1253:345 1254:190 1273:165 1275:345 1280:345 1281:180 1290:165 1306:190 1308:345 1315:345 1316:200 1334:185 1336:345 1339:345 1342:200 1350:185 1380:170 1395:205 1405:185 1420:160 1430:190 1445:175 1455:210 1470:230 1480:215 1492:235 1495:160 1498:160 1500:190 1510:190 1511:285 1514:285 1515:210 1530:180 1540:215 1555:185 1568:200'],
  [700, 2.529, '52:300 62:265 70:235 85:215 95:200 105:200 118:240 125:220 135:240 143:185 150:165 158:195 165:180 178:235 185:205 195:225 200:180 210:180 220:215 230:180 239:160 242:160 247:180 249:325 253:345 301:345 303:200 312:235 322:180 332:220 334:335 343:320 346:180 352:205 360:180 372:210 374:345 380:345 398:335 415:335 418:205 430:195 440:170 442:345 447:345 449:180 475:170 477:262 480:262 482:160 500:190 507:215 510:190 522:165 550:180 580:170 597:210 610:175 618:165 636:180 637:295 640:295 641:165 655:205 665:170 690:200 700:165 703:262 706:262 708:160 711:230 713:345 746:345 748:185 765:170 785:170 787:230 789:230 790:170 808:190 820:185 850:180 870:165 880:190 895:180 905:165 920:190 939:170 941:250 955:170 974:165 976:250 980:250 981:180 1000:165 1040:205 1060:205 1070:170 1130:175 1150:195 1180:165 1230:200 1250:165 1290:165 1312:175 1313:305 1316:305 1317:200 1345:165 1380:205 1400:190 1420:185 1421:262 1424:262 1425:170 1470:180 1490:165 1492:345 1495:345 1496:175 1515:195'],
  [1300, 2.529, '0:195 12:185 22:205 35:170 50:165 70:205 94:180 96:345 120:345 122:205 128:180 138:215 150:175 180:180 200:205 225:180 236:215 260:180 290:215 310:180 330:215 345:170 390:180 392:250 395:250 398:165 402:345 407:345 408:185 440:165 469:210 470:345 481:345 483:180 510:170 530:215 550:205 575:235 578:180 605:200 607:250 609:250 610:165 640:180 662:170 663:250 665:250 666:170 711:170 713:345 716:345 717:190 745:165 775:170 783:210 802:230 810:180 838:165 841:345 845:345 846:180 880:175 910:165 912:260 914:345 922:345 924:180 946:170 948:295 950:295 952:170 975:215 990:190 1010:175 1050:165 1060:220 1075:225 1090:180 1122:180 1125:345 1132:345 1136:180 1180:170 1235:200 1246:200 1248:250 1250:180 1290:185 1310:190 1311:295 1314:295 1315:170 1350:170 1368:215 1380:185 1423:170 1426:345 1433:345 1436:180 1466:185 1469:335 1472:335 1474:215 1478:215 1480:345 1483:345']
];
const points = profile.flatMap(([origin, unit, text]) => text.split(' ').map(p => {
  const [x, y] = p.split(':').map(Number);
  return [origin + x / unit - 217, y / 3 - 53];
})).sort((a, b) => a[0] - b[0]);
let d = 'M0 69', k = 0, seed = 17;
for (let x = 0; x < 1669; x++) {
  while (k < points.length - 2 && points[k + 1][0] <= x) k++;
  const [a, b] = [points[k], points[k + 1]];
  const t = Math.min(1, Math.max(0, (x - a[0]) / (b[0] - a[0] || 1)));
  let y = a[1] + (b[1] - a[1]) * t;
  seed = (seed * 1103515245 + 12345) % 2147483648;
  if (y < 30) y += [-5, -2, 0, 0, 0, 1, 4][Math.floor(seed / 65536) % 7];
  y = Math.max(0, Math.round(y));
  d += `V${y}H${x + 1}`;
}
byId('overview').innerHTML = `<path d="${d}V69z" fill="#a0a0a4"/>`;

// Spread letters so that each label takes its nominal width
document.querySelectorAll('[data-w]').forEach(el => {
  const range = document.createRange();
  range.selectNodeContents(el);
  const natural = range.getBoundingClientRect().width;
  el.style.letterSpacing = (el.dataset.w - natural) / el.textContent.length + 'px';
});
```
